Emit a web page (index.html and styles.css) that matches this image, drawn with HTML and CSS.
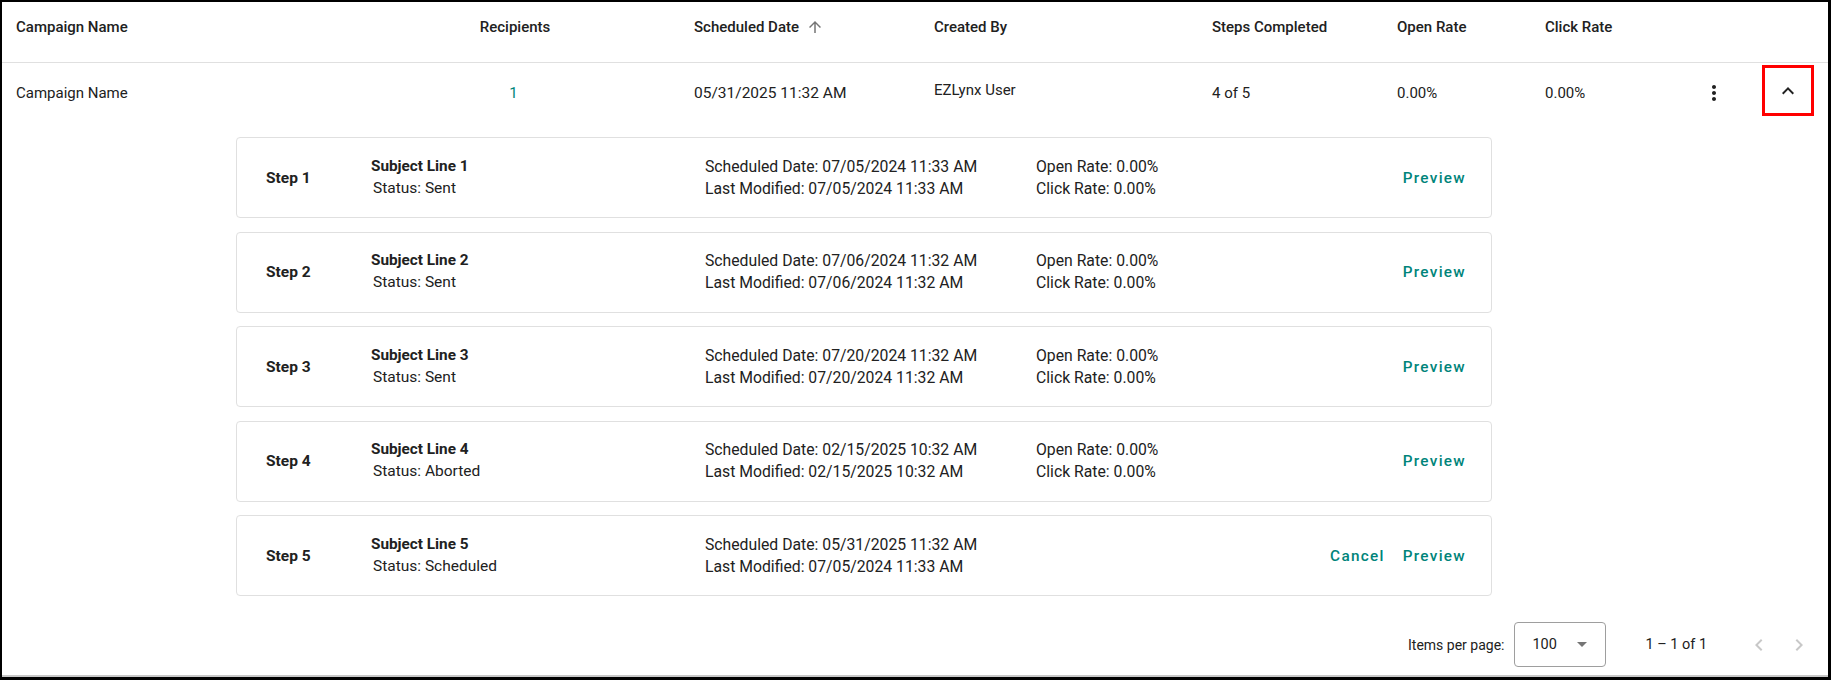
FILE: index.html
```html
<!DOCTYPE html>
<html lang="en">
<head>
<meta charset="utf-8">
<title>Campaigns</title>
<link rel="stylesheet" href="styles.css">
</head>
<body>
<div class="page">
  <div class="table">
    <div class="grid head">
      <div class="c-name">Campaign Name</div>
      <div class="c-rec">Recipients</div>
      <div class="c-date">Scheduled Date
        <svg class="sort" viewBox="0 0 24 24" width="18" height="18"><path d="M4 12l1.41 1.41L11 7.83V20h2V7.83l5.58 5.59L20 12l-8-8-8 8z"/></svg>
      </div>
      <div class="c-by">Created By</div>
      <div class="c-steps">Steps Completed</div>
      <div class="c-open">Open Rate</div>
      <div class="c-click">Click Rate</div>
      <div></div>
      <div></div>
    </div>
    <div class="grid row">
      <div class="c-name">Campaign Name</div>
      <div class="c-rec link">1</div>
      <div class="c-date date-val">05/31/2025 11:32 AM</div>
      <div class="c-by by-up">EZLynx User</div>
      <div class="c-steps">4 of 5</div>
      <div class="c-open">0.00%</div>
      <div class="c-click">0.00%</div>
      <div class="icon-cell">
        <svg viewBox="0 0 24 24" width="24" height="24"><path d="M12 8c1.1 0 2-.9 2-2s-.9-2-2-2-2 .9-2 2 .9 2 2 2zm0 2c-1.1 0-2 .9-2 2s.9 2 2 2 2-.9 2-2-.9-2-2-2zm0 6c-1.1 0-2 .9-2 2s.9 2 2 2 2-.9 2-2-.9-2-2-2z"/></svg>
      </div>
      <div class="toggle">
        <svg viewBox="0 0 24 24" width="24" height="24"><path d="M12 8l-6 6 1.41 1.41L12 10.83l4.59 4.58L18 14z"/></svg>
      </div>
    </div>

    <div class="steps">
      <div class="card">
        <div class="step">Step 1</div>
        <div class="subj"><div class="subj-title">Subject Line 1</div><div class="subj-status">Status: Sent</div></div>
        <div class="two"><div>Scheduled Date: 07/05/2024 11:33 AM</div><div>Last Modified: 07/05/2024 11:33 AM</div></div>
        <div class="two"><div>Open Rate: 0.00%</div><div>Click Rate: 0.00%</div></div>
        <div class="actions"><span class="btn">Preview</span></div>
      </div>
      <div class="card">
        <div class="step">Step 2</div>
        <div class="subj"><div class="subj-title">Subject Line 2</div><div class="subj-status">Status: Sent</div></div>
        <div class="two"><div>Scheduled Date: 07/06/2024 11:32 AM</div><div>Last Modified: 07/06/2024 11:32 AM</div></div>
        <div class="two"><div>Open Rate: 0.00%</div><div>Click Rate: 0.00%</div></div>
        <div class="actions"><span class="btn">Preview</span></div>
      </div>
      <div class="card">
        <div class="step">Step 3</div>
        <div class="subj"><div class="subj-title">Subject Line 3</div><div class="subj-status">Status: Sent</div></div>
        <div class="two"><div>Scheduled Date: 07/20/2024 11:32 AM</div><div>Last Modified: 07/20/2024 11:32 AM</div></div>
        <div class="two"><div>Open Rate: 0.00%</div><div>Click Rate: 0.00%</div></div>
        <div class="actions"><span class="btn">Preview</span></div>
      </div>
      <div class="card">
        <div class="step">Step 4</div>
        <div class="subj"><div class="subj-title">Subject Line 4</div><div class="subj-status">Status: Aborted</div></div>
        <div class="two"><div>Scheduled Date: 02/15/2025 10:32 AM</div><div>Last Modified: 02/15/2025 10:32 AM</div></div>
        <div class="two"><div>Open Rate: 0.00%</div><div>Click Rate: 0.00%</div></div>
        <div class="actions"><span class="btn">Preview</span></div>
      </div>
      <div class="card">
        <div class="step">Step 5</div>
        <div class="subj"><div class="subj-title">Subject Line 5</div><div class="subj-status">Status: Scheduled</div></div>
        <div class="two"><div>Scheduled Date: 05/31/2025 11:32 AM</div><div>Last Modified: 07/05/2024 11:33 AM</div></div>
        <div class="two"></div>
        <div class="actions"><span class="btn">Cancel</span><span class="btn">Preview</span></div>
      </div>
    </div>

    <div class="paginator">
      <span class="ipp">Items per page:</span>
      <div class="select"><span>100</span><span class="tri"></span></div>
      <span class="range">1 – 1 of 1</span>
      <div class="nav">
        <svg viewBox="0 0 24 24" width="24" height="24"><path d="M15.41 7.41L14 6l-6 6 6 6 1.41-1.41L10.83 12z"/></svg>
        <svg viewBox="0 0 24 24" width="24" height="24"><path d="M10 6L8.59 7.41 13.17 12l-4.58 4.59L10 18l6-6z"/></svg>
      </div>
    </div>
  </div>
</div>
</body>
</html>
```

FILE: styles.css
```css
* { box-sizing: border-box; }
html, body { margin: 0; padding: 0; background: #fff; }
body {
  font-family: Roboto, "Liberation Sans", Arial, sans-serif;
  color: #212121;
}
.page {
  width: 1831px;
  height: 680px;
  border-style: solid;
  border-color: #000;
  border-width: 2px 3px 3px 2px;
}
.table {
  height: 100%;
  display: flex;
  flex-direction: column;
  border-bottom: 2px solid #c8c8c8;
}
.grid {
  display: grid;
  grid-template-columns: 463px 72px 383px 278px 185px 148px 145px 48px 24px 52px;
  padding-left: 14px;
  align-items: center;
}
.grid .c-rec { text-align: center; }
.grid .c-date { padding-left: 143px; display: flex; align-items: center; }
.head {
  height: 61px;
  padding-bottom: 10px;
  border-bottom: 1px solid #e0e0e0;
  font-size: 15px;
  font-weight: 500;
}
.sort { fill: #757575; margin-left: 7px; margin-top: -1px; }
.row {
  height: 58px;
  padding-top: 2px;
  font-size: 15px;
}
.row .c-rec { padding-right: 3px; }
.row .date-val { font-size: 15.5px; }
.by-up { margin-top: -6px; }
.link { color: #00847a; }
.icon-cell { display: flex; justify-content: center; }
.icon-cell svg { fill: #212121; }
.toggle {
  grid-column: 10;
  width: 52px;
  height: 51px;
  margin-top: -5px;
  border: 3px solid #ff0000;
  display: flex;
  align-items: center;
  justify-content: center;
}
.toggle svg { fill: #212121; }
.grid > div:nth-child(8) { grid-column: 8; }

.steps {
  padding: 16px 0 0 234px;
  display: flex;
  flex-direction: column;
  gap: 13.5px;
}
.card {
  width: 1256px;
  height: 81px;
  border: 1px solid #e0e0e0;
  border-radius: 4px;
  display: grid;
  grid-template-columns: 105px 334px 331px 1fr auto;
  align-items: center;
  padding: 0 17px 0 29px;
  font-size: 15.75px;
}
.step { font-weight: 700; font-size: 15.5px; }
.subj-title { font-weight: 700; font-size: 15.3px; line-height: 22px; margin-top: -2px; }
.subj-status { line-height: 22px; padding-left: 2px; font-size: 15.5px; }
.two div { line-height: 22px; }
.actions { display: flex; gap: 2px; }
.btn {
  color: #00847a;
  font-weight: 500;
  font-size: 15.3px;
  letter-spacing: 1.3px;
  padding: 0 8px;
  line-height: 36px;
}
.paginator {
  margin-top: auto;
  margin-bottom: 8px;
  height: 45px;
  display: flex;
  align-items: center;
  padding-left: 1406px;
  font-size: 14px;
  color: #212121;
}
.select {
  margin-left: 10px;
  width: 92px;
  height: 45px;
  border: 1px solid #9e9e9e;
  border-radius: 4px;
  display: flex;
  align-items: center;
  justify-content: space-between;
  padding: 0 18px 0 17px;
  font-size: 14.5px;
}
.tri {
  width: 0; height: 0;
  border-left: 5px solid transparent;
  border-right: 5px solid transparent;
  border-top: 5px solid #757575;
}
.range { margin-left: 39px; font-size: 14.5px; }
.nav { margin-left: 40px; display: flex; gap: 16px; }
.nav svg { fill: #c8c8c8; }
```
